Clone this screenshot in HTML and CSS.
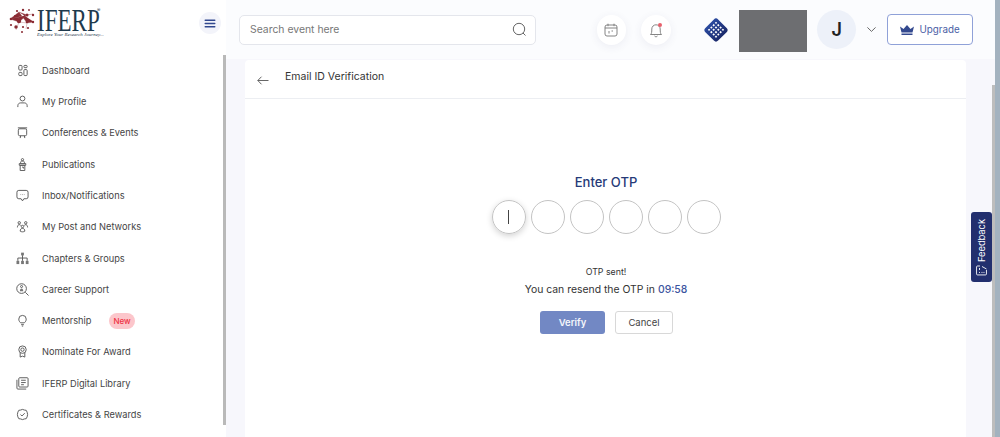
FILE: index.html

```html
<!DOCTYPE html>
<html lang="en">
<head>
  <meta charset="UTF-8" />
  <meta name="viewport" content="width=device-width, initial-scale=1.0"/>
  <title>Email ID Verification</title>
  <link rel="stylesheet" href="styles.css">
</head>
<body>
  <div class="app">
    <aside class="sidebar">
      <div class="side-top">
        <div class="logo">
          <svg class="logo-mark" width="28" height="26" viewBox="0 0 28 26" fill="#8a2b33">
            <g stroke="#a5565c" stroke-width=".35"><path d="M2 12 11 5 19 8 25 7M2 12l9 3 8-7M11 5l8 11 7-1M11 15l8 1M8 23l3-8M19 16l-1 6M11 5v10"/></g>
            <circle cx="11" cy="14" r="2.200"/><circle cx="19" cy="8" r="1.500"/><circle cx="3" cy="12" r="1.300"/><circle cx="9" cy="4" r="1.100"/>
            <circle cx="15" cy="3" r="1.200"/><circle cx="21" cy="3" r=".9"/><circle cx="25" cy="8" r="1.200"/><circle cx="19" cy="15" r="1.300"/>
            <circle cx="25" cy="15" r="1.200"/><circle cx="8" cy="20" r="1.700"/><circle cx="15" cy="20" r="1.100"/><circle cx="7" cy="9" r="1"/>
            <circle cx="20" cy="21" r="1.100"/><circle cx="14" cy="25" r="1"/><circle cx="3" cy="18" r="1.100"/>
          </svg>
          <div class="logo-name">IFERP</div>
          <span class="logo-reg">®</span>
          <div class="logo-tag">Explore Your Research Journey...</div>
        </div>
        <button class="menu-btn">
          <svg width="12" height="9" viewBox="0 0 12 9" fill="#33498f"><rect width="11" height="1.500" rx=".7" y=".5" x=".5"/><rect width="11" height="1.500" rx=".7" y="3.700" x=".5"/><rect width="11" height="1.500" rx=".7" y="7" x=".5"/></svg>
        </button>
      </div>
      <nav class="nav">
        <a class="nav-item">
          <svg class="nav-icon" viewBox="0 0 14 14"><rect x="3" y="1.500" width="3.500" height="5" rx="1"/><rect x="8.500" y="1.500" width="3.500" height="2.500" rx="1"/><rect x="3" y="9" width="3.500" height="3.500" rx="1"/><rect x="8.500" y="6" width="3.500" height="6.500" rx="1"/></svg>
          Dashboard
        </a>
        <a class="nav-item">
          <svg class="nav-icon" viewBox="0 0 14 14"><circle cx="7" cy="3.800" r="2.600"/><path d="M2 13v-1.500C2 9.500 3.500 8.500 5 8.500h4c1.500 0 3 1 3 3V13"/></svg>
          My Profile
        </a>
        <a class="nav-item">
          <svg class="nav-icon" viewBox="0 0 14 14"><rect x="2.500" y="3" width="9" height="7.500" rx="1.500"/><path d="M2 2h10M5 10.500 4.500 13M9 10.500l.5 2.500"/></svg>
          Conferences &amp; Events
        </a>
        <a class="nav-item">
          <svg class="nav-icon" viewBox="0 0 14 14"><circle cx="7" cy="1.800" r="1.200"/><path d="M5 6V4.500c0-1 1-1.200 2-1.200s2 .2 2 1.200V6M3.500 6h7v1.800h-7zM4.500 7.800h5v5.700h-5zM6.500 9.800h1.500v1.500"/></svg>
          Publications
        </a>
        <a class="nav-item">
          <svg class="nav-icon wide" viewBox="0 0 14 14"><path d="M3 1.500h8a2 2 0 0 1 2 2v5a2 2 0 0 1-2 2H8.500L7 12.800 5.500 10.500H3a2 2 0 0 1-2-2v-5a2 2 0 0 1 2-2z"/><path d="M5 6h.5M6.800 6h.5M8.500 6H9"/></svg>
          Inbox/Notifications
        </a>
        <a class="nav-item">
          <svg class="nav-icon" viewBox="0 0 14 14"><circle cx="3.500" cy="3" r="1.300"/><circle cx="10.500" cy="3" r="1.300"/><circle cx="7" cy="7" r="1.300"/><path d="M1.500 8c0-2 1-3 2-3s1.500.5 1.700 1M12.500 8c0-2-1-3-2-3s-1.500.5-1.700 1M4.500 12c0-2 1-3 2.500-3s2.500 1 2.500 3c-1.500 1-3.500 1-5 0z"/></svg>
          My Post and Networks
        </a>
        <a class="nav-item">
          <svg class="nav-icon wide" viewBox="0 0 14 14"><rect x="5.500" y=".7" width="3" height="3" class="solid"/><rect x=".5" y="9.500" width="3" height="3.500" class="solid"/><rect x="5.500" y="9.500" width="3" height="3.500" class="solid"/><rect x="10.500" y="9.500" width="3" height="3.500" class="solid"/><path d="M7 3.500v6M2 9.500V6.500h10v3"/></svg>
          Chapters &amp; Groups
        </a>
        <a class="nav-item">
          <svg class="nav-icon wide" viewBox="0 0 14 14"><circle cx="6" cy="6" r="5.200"/><path d="m10 10 3.500 3.500"/><circle cx="6" cy="3.800" r="1.100"/><path d="M4.200 8.800c0-2 .8-3 1.800-3s1.800 1 1.800 3z" class="solid"/></svg>
          Career Support
        </a>
        <a class="nav-item">
          <svg class="nav-icon" viewBox="0 0 14 14"><path d="M5 9.500C4 8.500 3 7.500 3 5.500a4 4 0 0 1 8 0c0 2-1 3-2 4zM5.500 11.500h3M6.300 13h1.400"/></svg>
          Mentorship
          <span class="badge-new">New</span>
        </a>
        <a class="nav-item">
          <svg class="nav-icon" viewBox="0 0 14 14"><circle cx="7" cy="5" r="4"/><circle cx="7" cy="5" r="1.800"/><path d="M4.500 8.500V13L7 12l2.500 1V8.500"/></svg>
          Nominate For Award
        </a>
        <a class="nav-item">
          <svg class="nav-icon wide" viewBox="0 0 14 14"><rect x="3" y=".8" width="10" height="10" rx="1"/><path d="M1 3v9a1 1 0 0 0 1 1h9M5.500 3.500h5M5.500 6h5M5.500 8.300h3"/></svg>
          IFERP Digital Library
        </a>
        <a class="nav-item">
          <svg class="nav-icon" viewBox="0 0 14 14"><path d="M7 1.500 9 2.200l2 .3 1 2 .5 2.500-.5 2.500-1 2-2 .3-2 .7-2-.7-2-.3-1-2L1.500 7 2 4.500l1-2 2-.3z"/><path d="m4.800 7 1.600 1.600 3-3"/></svg>
          Certificates &amp; Rewards
        </a>
      </nav>
      <div class="side-scroll"></div>
    </aside>

    <div class="main">
      <header class="topbar">
        <div class="search">
          <span>Search event here</span>
          <svg width="15" height="15" viewBox="0 0 15 15" fill="none" stroke="#666" stroke-width="1"><circle cx="7" cy="7" r="5.700"/><path d="m11 11 2.500 2.500"/></svg>
        </div>
        <div class="round-btn first">
          <svg width="14" height="14" viewBox="0 0 14 14" fill="none" stroke="#777" stroke-width=".9"><rect x="1" y="2" width="12" height="11" rx="2"/><path d="M1 5h12M4 .7v2.500M10 .7v2.500M5 8v2.500M7.500 8h1.500"/></svg>
        </div>
        <div class="round-btn">
          <svg width="14" height="16" viewBox="0 0 14 16" fill="none" stroke="#777" stroke-width=".9"><path d="M1.500 12.500c1.200-1 1.300-2.500 1.300-5.500a4.200 4.200 0 0 1 8.400 0c0 3 .1 4.500 1.300 5.500zM5.500 14c.8 1 2.200 1 3 0"/></svg>
          <span class="dot"></span>
        </div>
        <div class="brand-tile">
          <svg width="12" height="12" viewBox="0 0 12 12" fill="#fff"><rect x="0" y="0" width="1.800" height="1.800"/><rect x="3.300" y="0" width="1.800" height="1.800"/><rect x="6.600" y="0" width="1.800" height="1.800"/><rect x="9.900" y="0" width="1.800" height="1.800"/><rect x="0" y="3.300" width="1.800" height="1.800"/><rect x="3.300" y="3.300" width="1.800" height="1.800"/><rect x="6.600" y="3.300" width="1.800" height="1.800"/><rect x="9.900" y="3.300" width="1.800" height="1.800"/><rect x="0" y="6.600" width="1.800" height="1.800"/><rect x="3.300" y="6.600" width="1.800" height="1.800"/><rect x="6.600" y="6.600" width="1.800" height="1.800"/><rect x="9.900" y="6.600" width="1.800" height="1.800"/><rect x="0" y="9.900" width="1.800" height="1.800"/><rect x="3.300" y="9.900" width="1.800" height="1.800"/><rect x="6.600" y="9.900" width="1.800" height="1.800"/><rect x="9.900" y="9.900" width="1.800" height="1.800"/></svg>
        </div>
        <div class="grey-box"></div>
        <div class="avatar">J</div>
        <svg class="chev" width="9" height="5" viewBox="0 0 9 5" fill="none" stroke="#666" stroke-width="1"><path d="m.4.4 4.100 4 4.100-4"/></svg>
        <button class="upgrade">
          <svg width="14" height="10" viewBox="0 0 14 10" fill="#33498f"><path d="M0 1.500 3.500 4 7 0l3.500 4L14 1.500 12.500 7.500h-11zM1.500 8.500h11V10h-11z"/></svg>
          Upgrade
        </button>
      </header>

      <div class="content">
        <section class="card">
          <div class="card-head">
            <svg class="back" width="12" height="9" viewBox="0 0 12 9" fill="none" stroke="#666" stroke-width="1"><path d="M11.500 4.500H.8M4.500.7.800 4.500l3.700 3.800"/></svg>
            <span>Email ID Verification</span>
          </div>
          <div class="otp-wrap">
            <h2>Enter OTP</h2>
            <div class="otp-row">
              <div class="otp-cell active"><i class="caret"></i></div>
              <div class="otp-cell"></div>
              <div class="otp-cell"></div>
              <div class="otp-cell"></div>
              <div class="otp-cell"></div>
              <div class="otp-cell"></div>
            </div>
            <p class="sent">OTP sent!</p>
            <p class="resend">You can resend the OTP in <b>09:58</b></p>
            <div class="actions">
              <button class="btn-verify">Verify</button>
              <button class="btn-cancel">Cancel</button>
            </div>
          </div>
        </section>
        <div class="feedback">
          <span>Feedback</span>
          <svg width="11" height="11" viewBox="0 0 11 11" fill="none" stroke="#fff" stroke-width=".9"><path d="M10 4V1.500a1 1 0 0 0-1-1H2a1 1 0 0 0-1 1v8a1 1 0 0 0 1 1h4M3 3.500h1M3 6h1M3 8h1M6 3.500h2M9.500 6 7 10.500"/></svg>
        </div>
      </div>
      <div class="page-scroll"><div class="page-thumb"></div></div>
    </div>
  </div>
</body>
</html>
```

FILE: styles.css

```css
* {
  box-sizing: border-box;
}

html, body {
  height: 100%;
}

body {
  margin: 0;
  font-family: Inter, "Liberation Sans", sans-serif;
  background-color: #ffffff;
  color: #333;
  overflow: hidden;
}

.app {
  display: flex;
  height: 437px;
}

/* Sidebar */
.sidebar {
  position: relative;
  width: 226px;
  flex-shrink: 0;
  background-color: #ffffff;
}

.side-top {
  height: 54.600px;
  display: flex;
  justify-content: space-between;
  padding: 7px 5px 0 8px;
}

.logo {
  position: relative;
  width: 96px;
  height: 32px;
}

.logo-mark {
  position: absolute;
  left: 0;
  top: 0;
}

.logo-name {
  position: absolute;
  left: 29px;
  top: 2px;
  font-family: "Liberation Serif", serif;
  font-size: 32px;
  line-height: 23px;
  color: #1f3a4d;
  transform: scaleX(0.72);
  transform-origin: left top;
}

.logo-reg {
  position: absolute;
  left: 89px;
  top: 0;
  font-size: 5px;
  line-height: 6px;
  color: #1f3a4d;
}

.logo-tag {
  position: absolute;
  left: 29px;
  top: 25px;
  height: 6px;
  line-height: 6px;
  font-family: "Liberation Serif", serif;
  font-style: italic;
  font-size: 5px;
  white-space: nowrap;
  color: #1f3a4d;
}

.menu-btn {
  width: 22px;
  height: 22px;
  margin-top: 5px;
  padding: 0;
  border: none;
  border-radius: 50%;
  background-color: #f3f4fa;
  display: flex;
  align-items: center;
  justify-content: center;
}

.nav {
  display: flex;
  flex-direction: column;
}

.nav-item {
  height: 31.300px;
  display: flex;
  align-items: center;
  padding-left: 16px;
  font-size: 9.250px;
  color: #444;
  white-space: nowrap;
}

.nav-icon {
  width: 13px;
  height: 13px;
  margin-right: 13px;
  fill: none;
  stroke: #555;
  stroke-width: 1;
}

.nav-icon .solid {
  fill: #777;
  stroke: none;
}

.badge-new {
  margin-left: 18px;
  padding: 0 4px;
  height: 16px;
  line-height: 17px;
  border-radius: 8px;
  background-color: #fcc6cb;
  color: #ee3344;
  font-size: 8px;
  font-weight: 500;
}

.side-scroll {
  position: absolute;
  right: 0;
  top: 55px;
  height: 370px;
  width: 3px;
  background-color: #b9b9b9;
}

/* Top bar */
.main {
  position: relative;
  flex: 1;
  min-width: 0;
  display: flex;
  flex-direction: column;
  background-color: #f7f7fc;
}

.topbar {
  height: 59px;
  flex-shrink: 0;
  display: flex;
  align-items: center;
  padding: 0 27px 0 13px;
  background-color: #fbfcfe;
}

.search {
  width: 297px;
  height: 30px;
  padding: 0 8px 0 10px;
  display: flex;
  align-items: center;
  justify-content: space-between;
  background-color: #fff;
  border: 1px solid #e4e6ec;
  border-radius: 5px;
  font-size: 10.400px;
  color: #777;
}

.round-btn {
  position: relative;
  width: 30px;
  height: 30px;
  margin-left: 15px;
  border-radius: 50%;
  background-color: #fff;
  box-shadow: 0 2px 8px rgba(60, 70, 120, 0.08);
  display: flex;
  align-items: center;
  justify-content: center;
}

.round-btn.first {
  margin-left: 61px;
}

.dot {
  position: absolute;
  right: 9px;
  top: 8px;
  width: 4px;
  height: 4px;
  border-radius: 50%;
  background-color: #e8606c;
}

.brand-tile {
  width: 18px;
  height: 18px;
  margin-left: 36px;
  border-radius: 3px;
  background: linear-gradient(90deg, #2a4aa0, #1b2a6b);
  transform: rotate(45deg);
  display: flex;
  align-items: center;
  justify-content: center;
}

.grey-box {
  width: 68px;
  height: 42px;
  margin: 3px 0 0 14px;
  background-color: #6d6e71;
}

.avatar {
  width: 39px;
  height: 39px;
  margin-left: 10px;
  border-radius: 50%;
  background-color: #edf1f9;
  display: flex;
  align-items: center;
  justify-content: center;
  font-size: 18px;
  font-weight: 600;
  color: #222;
}

.chev {
  margin-left: 11px;
}

.upgrade {
  width: 86px;
  height: 31px;
  margin-left: 11px;
  padding: 0;
  display: flex;
  align-items: center;
  justify-content: center;
  gap: 5px;
  border: 1px solid #8fa1d8;
  border-radius: 4px;
  background-color: #fff;
  color: #4a5ea5;
  font-family: inherit;
  font-size: 9.800px;
}

/* Content */
.content {
  position: relative;
  flex: 1;
  padding: 1px 34px 0 19px;
}

.card {
  height: 100%;
  background-color: #fff;
  border-radius: 4px 4px 0 0;
}

.card-head {
  position: relative;
  height: 39px;
  border-bottom: 1px solid #eceef2;
  display: flex;
  align-items: flex-start;
  padding: 10px 0 0 40px;
  font-size: 10.500px;
  color: #333;
}

.back {
  position: absolute;
  left: 12px;
  top: 16px;
}

.otp-wrap {
  display: flex;
  flex-direction: column;
  align-items: center;
  padding-top: 75px;
  padding-left: 1px;
}

h2 {
  margin: 0;
  font-size: 13px;
  line-height: 16px;
  font-weight: 500;
  color: #263a78;
}

.otp-row {
  display: flex;
  gap: 5px;
  margin-top: 10px;
}

.otp-cell {
  width: 34px;
  height: 34px;
  border: 1px solid #c4c4c4;
  border-radius: 50%;
  display: flex;
  align-items: center;
  justify-content: center;
}

.otp-cell.active {
  box-shadow: 0 2px 6px rgba(0, 0, 0, 0.18);
}

.caret {
  width: 1px;
  height: 14px;
  background-color: #444;
}

.sent {
  margin: 32px 0 0;
  font-size: 8.800px;
  line-height: 11px;
  color: #333;
}

.resend {
  margin: 6px 0 0;
  font-size: 10.400px;
  line-height: 13px;
  color: #333;
}

.resend b {
  font-weight: 500;
  color: #3c55a0;
}

.actions {
  display: flex;
  gap: 10px;
  margin: 15px 0 0 1px;
}

.actions button {
  height: 23px;
  padding: 0;
  font-family: inherit;
  font-size: 9.500px;
  border-radius: 3px;
}

.btn-verify {
  width: 65px;
  border: none;
  background-color: #7288c4;
  color: #f4f6fb;
  font-weight: 600;
}

.btn-cancel {
  width: 58px;
  border: 1px solid #d8d8d8;
  background-color: #fff;
  color: #444;
}

.feedback {
  position: absolute;
  right: 8px;
  top: 153px;
  width: 21px;
  height: 70px;
  display: flex;
  flex-direction: column;
  align-items: center;
  justify-content: flex-end;
  gap: 3px;
  padding: 7px 0 6px;
  background-color: #222f6e;
  border-radius: 3px;
  color: #fff;
  font-size: 9.300px;
}

.feedback span {
  writing-mode: vertical-rl;
  transform: rotate(180deg);
}

.feedback svg {
  transform: rotate(-90deg);
}

/* Page scrollbar */
.page-scroll {
  position: absolute;
  right: 0;
  top: 0;
  bottom: 0;
  width: 5px;
  background-color: #a3b2bf;
}

.page-thumb {
  position: absolute;
  left: -3px;
  top: 85px;
  bottom: 0;
  width: 3px;
  background-color: #bdbdbd;
}
```
